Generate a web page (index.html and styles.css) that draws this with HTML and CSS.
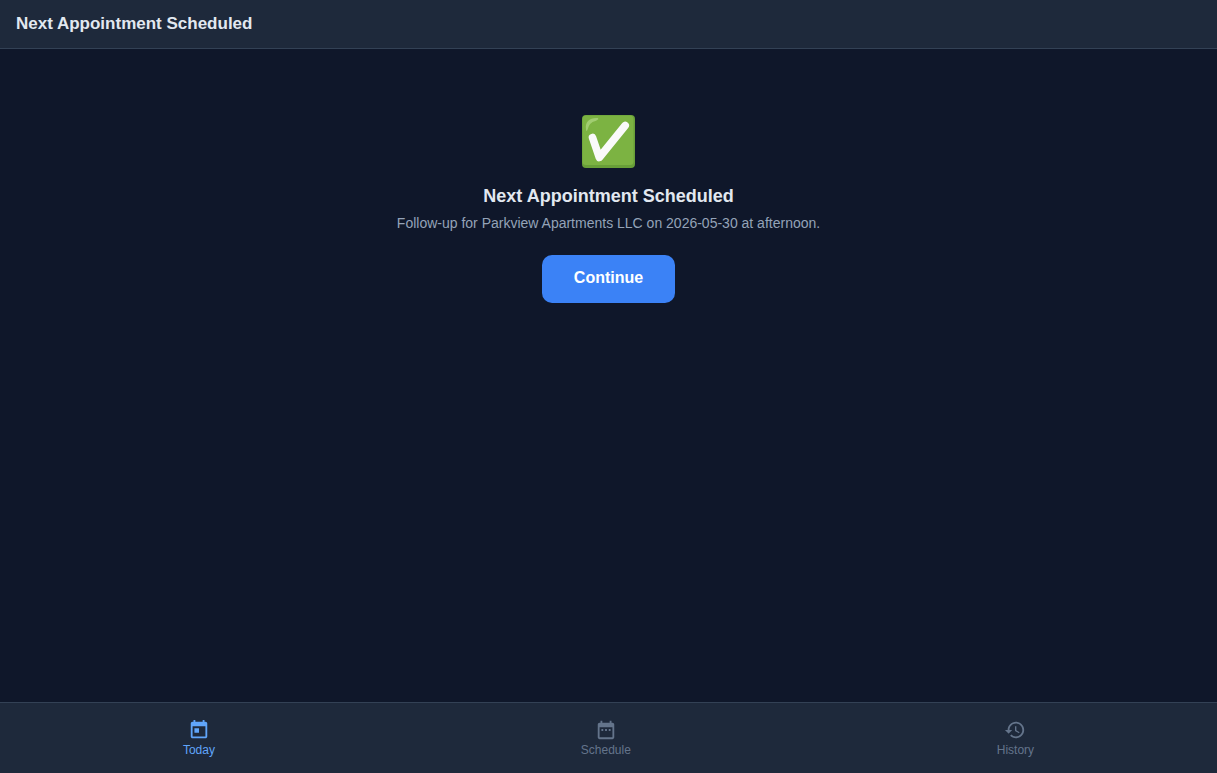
FILE: index.html
```html
<!DOCTYPE html>
<html lang="en">
<head>
<meta charset="utf-8">
<meta name="viewport" content="width=device-width, initial-scale=1">
<title>Next Appointment Scheduled</title>
<link rel="stylesheet" href="styles.css">
</head>
<body>
<header class="topbar">
  <h1 class="topbar-title">Next Appointment Scheduled</h1>
</header>
<main class="content">
  <svg class="success-icon" viewBox="0 0 53 53" role="img" aria-label="Success">
    <rect width="53" height="53" rx="4" fill="#689f38"/>
    <path d="M4 .5H48Q51.500 .5 51.500 4V46.500Q51.500 50 48 50H4Q.5 50 .5 46.500V4Q.5 .5 4 .5Z" fill="#7cb342"/>
    <path d="M4 14.500C3 7 7 3 14.500 3C17.500 3 16.500 5 13.500 6C9 7 7 10 6 13.500C5 16.500 4 16.500 4 14.500Z" fill="#aed581" opacity=".75"/>
    <path d="M10.500 22.500L17.300 42.500L43.200 10.500" fill="none" stroke="#fafafa" stroke-width="7.600" stroke-linecap="round" stroke-linejoin="round"/>
  </svg>
  <h2 class="message-title">Next Appointment Scheduled</h2>
  <p class="message-text">Follow-up for Parkview Apartments LLC on 2026-05-30 at afternoon.</p>
  <button class="continue" type="button">Continue</button>
</main>
<nav class="tabs" aria-label="Main">
  <a class="tab tab-active" href="#today" aria-current="page">
    <svg class="tab-icon" viewBox="0 0 24 24" aria-hidden="true"><path d="M19 3h-1V1h-2v2H8V1H6v2H5c-1.110 0-1.990.9-1.990 2L3 19c0 1.100.89 2 2 2h14c1.100 0 2-.9 2-2V5c0-1.100-.9-2-2-2zm0 16H5V8h14v11zM7 10h5v5H7z"/></svg>
    <span>Today</span>
  </a>
  <a class="tab" href="#schedule">
    <svg class="tab-icon" viewBox="0 0 24 24" aria-hidden="true"><path d="M9 11H7v2h2v-2zm4 0h-2v2h2v-2zm4 0h-2v2h2v-2zm2-7h-1V2h-2v2H8V2H6v2H5c-1.110 0-1.990.9-1.990 2L3 20c0 1.100.89 2 2 2h14c1.100 0 2-.9 2-2V6c0-1.100-.9-2-2-2zm0 16H5V9h14v11z"/></svg>
    <span>Schedule</span>
  </a>
  <a class="tab" href="#history">
    <svg class="tab-icon" viewBox="0 0 24 24" aria-hidden="true"><path d="M13 3c-4.970 0-9 4.030-9 9H1l3.890 3.890.07.14L9 12H6c0-3.870 3.130-7 7-7s7 3.130 7 7-3.130 7-7 7c-1.930 0-3.680-.79-4.940-2.060l-1.420 1.420C8.270 19.990 10.510 21 13 21c4.970 0 9-4.030 9-9s-4.030-9-9-9zm-1 5v5l4.280 2.540.72-1.210-3.500-2.080V8H12z"/></svg>
    <span>History</span>
  </a>
</nav>
</body>
</html>
```
FILE: styles.css
```css
* {
  box-sizing: border-box;
}

body {
  display: flex;
  flex-direction: column;
  min-height: 100vh;
  margin: 0;
  background: #0f172a;
  color: #e2e8f0;
  font-family: "Liberation Sans", Arial, sans-serif;
}

.topbar {
  padding: 14px 16px;
  background: #1e293b;
  border-bottom: 1px solid #334155;
}

.topbar-title {
  margin: 0;
  font-size: 17px;
  line-height: 20px;
}

.content {
  display: flex;
  flex: 1;
  flex-direction: column;
  align-items: center;
  padding: 66px 16px 16px;
  text-align: center;
}

.success-icon {
  width: 53px;
  height: 53px;
  margin-bottom: 17px;
}

.message-title {
  margin: 0 0 6px;
  font-size: 18px;
  line-height: 22px;
}

.message-text {
  margin: 0 0 22px;
  color: #94a3b8;
  font-size: 14px;
  line-height: 20px;
}

.continue {
  padding: 14px 32px 16px;
  border: 0;
  border-radius: 10px;
  background: #3b82f6;
  color: #fff;
  font: bold 16px/18px "Liberation Sans", Arial, sans-serif;
  cursor: pointer;
}

.tabs {
  display: flex;
  justify-content: space-around;
  padding: 16px 0;
  background: #1e293b;
  border-top: 1px solid #334155;
}

.tab {
  display: flex;
  flex-direction: column;
  align-items: center;
  gap: 2px;
  color: #64748b;
  font-size: 12px;
  line-height: 14px;
  text-decoration: none;
}

.tab-active {
  color: #60a5fa;
}

.tab-icon {
  width: 22px;
  height: 22px;
  fill: currentColor;
}
```
